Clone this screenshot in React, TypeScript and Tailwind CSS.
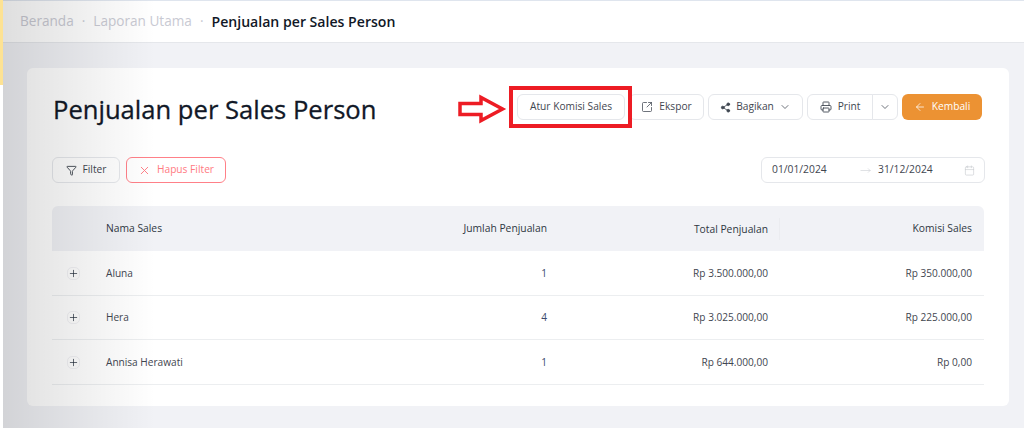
import { ArrowLeft, Calendar, ChevronDown, Filter, MoveRight, Plus, Printer, Share2, SquareArrowOutUpRight, X } from "lucide-react";

const rows = [
  { name: "Aluna", count: "1", total: "Rp 3.500.000,00", fee: "Rp 350.000,00", height: "h-[45px]" },
  { name: "Hera", count: "4", total: "Rp 3.025.000,00", fee: "Rp 225.000,00", height: "h-[44px]" },
  { name: "Annisa Herawati", count: "1", total: "Rp 644.000,00", fee: "Rp 0,00", height: "h-[45px]" },
];

const btn =
  "h-[26px] flex items-center justify-center rounded-[6px] border border-[#e5e7eb] bg-white text-[10.2px] text-[#3f4650]";

export default function App() {
  return (
    <div className="relative w-[1024px] h-[428px] overflow-hidden bg-[#f1f2f6] font-['Open_Sans',sans-serif]">
      {/* Header */}
      <div className="h-[43px] bg-white border-t border-b border-t-[#dfe5ee] border-b-[#e5e7eb] flex items-center pl-[20px] text-[13.6px]">
        <span className="text-[#c9cad3]">Beranda</span>
        <span className="text-[#c9cad3] mx-[8px]">·</span>
        <span className="text-[#c9cad3]">Laporan Utama</span>
        <span className="text-[#c9cad3] mx-[8px]">·</span>
        <span className="font-semibold text-[14.1px] text-[#111827]">Penjualan per Sales Person</span>
      </div>

      <div className="ml-[27px] mt-[25px] w-[982px] h-[338px] rounded-[6px] bg-white px-[25px] pt-[26px]">
        {/* Title row */}
        <div className="h-[26px] flex items-center justify-between">
          <h1 className="mt-[6px] ml-[1px] text-[25.6px] leading-[26px] font-normal text-[#111827] [-webkit-text-stroke:0.3px_#111827]">
            Penjualan per Sales Person
          </h1>
          <div className="flex items-center gap-[4px] mr-[2px]">
            <button className={`${btn} w-[108px]`}>Atur Komisi Sales</button>
            <button className={`${btn} w-[75px] gap-[6px]`}>
              <SquareArrowOutUpRight size={12} strokeWidth={1.5} />
              Ekspor
            </button>
            <button className={`${btn} w-[95px] gap-[5px]`}>
              <Share2 size={11} strokeWidth={1.75} fill="currentColor" />
              Bagikan
              <ChevronDown size={12} strokeWidth={1.5} />
            </button>
            <div className="flex">
              <button className={`${btn} w-[66px] gap-[6px] rounded-r-none`}>
                <Printer size={12} strokeWidth={1.75} />
                Print
              </button>
              <button className={`${btn} w-[26px] ml-[-1px] rounded-l-none`}>
                <ChevronDown size={12} strokeWidth={1.5} />
              </button>
            </div>
            <button className="h-[26px] w-[80px] flex items-center justify-center gap-[6px] rounded-[6px] bg-[#ec9233] text-[10.2px] text-white">
              <ArrowLeft size={12} strokeWidth={1.5} />
              Kembali
            </button>
          </div>
        </div>

        {/* Filters */}
        <div className="mt-[37px] h-[26px] flex items-center justify-between">
          <div className="flex gap-[6px]">
            <button className={`${btn} w-[68px] gap-[6px] border-[#dcdee2]`}>
              <Filter size={11} strokeWidth={2} />
              Filter
            </button>
            <button className="h-[26px] w-[100px] flex items-center justify-center gap-[6px] rounded-[6px] border border-[#ff8088] bg-white text-[10.2px] text-[#ff7a82]">
              <X size={13} strokeWidth={1.75} />
              Hapus Filter
            </button>
          </div>
          <div className="h-[26px] w-[224px] mr-[-1px] flex items-center rounded-[6px] border border-[#e5e7eb] pl-[10px] pr-[9px] text-[10.3px] text-[#3f4650]">
            <span className="w-[88px]">01/01/2024</span>
            <span className="w-[18px] text-[#c9ccd2]">
              <MoveRight size={11} strokeWidth={1.25} />
            </span>
            <span className="flex-1">31/12/2024</span>
            <Calendar size={11} strokeWidth={1.25} className="text-[#c4c7cc]" />
          </div>
        </div>

        {/* Table */}
        <div className="mt-[23px] w-[932px] text-[10.1px] text-[#3f4650]">
          <div className="grid grid-cols-[42px_232px_233px_221px_204px] h-[45px] items-center rounded-t-[6px] bg-[#f1f2f6] text-[10.3px] font-medium text-[#2f3742]">
            <div />
            <div className="pl-[12px]">Nama Sales</div>
            <div className="pr-[12px] text-right">Jumlah Penjualan</div>
            <div className="pr-[11px] text-right border-r border-[#ebecf0] leading-[22px]">Total Penjualan</div>
            <div className="pr-[12px] text-right">Komisi Sales</div>
          </div>
          {rows.map((row) => (
            <div
              key={row.name}
              className={`grid grid-cols-[42px_232px_233px_221px_204px] ${row.height} items-center border-b border-[#eceef0]`}
            >
              <div className="flex justify-center pl-[1px]">
                <span className="w-[13px] h-[13px] flex items-center justify-center rounded-[5px] border border-[#f1f1f4] text-[#1f2937]">
                  <Plus size={11} strokeWidth={1.5} className="shrink-0" />
                </span>
              </div>
              <div className="pl-[12px] pt-[1px]">{row.name}</div>
              <div className="pr-[12px] pt-[1px] text-right text-[#3b4a6b]">{row.count}</div>
              <div className="pr-[12px] pt-[1px] text-right">{row.total}</div>
              <div className="pr-[12px] pt-[1px] text-right">{row.fee}</div>
            </div>
          ))}
        </div>
      </div>

      {/* Drawer shadow and accent strip */}
      <div className="absolute left-0 top-0 w-[155px] h-full pointer-events-none bg-gradient-to-r from-black/[0.13] to-transparent" />
      <div className="absolute left-0 top-0 w-[3px] h-full bg-white" />
      <div className="absolute left-0 top-0 w-[3px] h-[85px] bg-[#fde293]" />

      {/* Annotation */}
      <div className="absolute left-[509px] top-[86px] w-[123px] h-[42px] border-[4.5px] border-[#ed1c24]" />
      <svg className="absolute left-[457px] top-[94px]" width="50" height="30" viewBox="0 0 50 30" fill="none">
        <path d="M3 9.5H24V3.5L45.5 15L24 26.5V20.5H3Z" stroke="#ed1c24" strokeWidth="3.5" />
      </svg>
    </div>
  );
}
